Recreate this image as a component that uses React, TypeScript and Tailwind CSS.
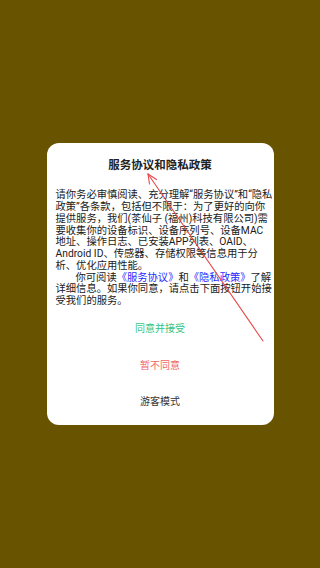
const FONT = { fontFamily: 'Roboto, "Noto Sans CJK SC", sans-serif' };

const lines = [
  "请你务必审慎阅读、充分理解“服务协议”和“隐私",
  "政策”各条款，包括但不限于：为了更好的向你",
  "提供服务，我们(茶仙子 (福州)科技有限公司)需",
  "要收集你的设备标识、设备序列号、设备MAC",
  "地址、操作日志、已安装APP列表、OAID、",
  "Android ID、传感器、存储权限等信息用于分",
  "析、优化应用性能。",
];

function Arrow() {
  return (
    <svg className="pointer-events-none absolute inset-0" width={320} height={568} viewBox="0 0 320 568">
      <g stroke="#e84848" strokeWidth={1.1} fill="none" strokeLinecap="round">
        <line x1={263} y1={341} x2={148} y2={174} />
        <line x1={148} y1={174} x2={149.5} y2={184} />
        <line x1={148} y1={174} x2={156.5} y2={179.5} />
      </g>
    </svg>
  );
}

export default function App() {
  return (
    <div className="relative flex h-[568px] w-[320px] items-center justify-center bg-[#685300]" style={FONT}>
      <div className="w-[227px] rounded-[12px] bg-white px-[9px] pb-[5px] pt-[14px]">
        <h1 className="text-center text-[11.5px] font-bold leading-[16px] text-[#222]">服务协议和隐私政策</h1>
        <div className="mt-[16px] whitespace-nowrap text-[10.3px] leading-[11.73px] text-[#1a1a1a]">
          {lines.map((l) => (
            <div key={l}>{l}</div>
          ))}
          <div className="pl-[20px]">
            你可阅读<span className="text-[#2a2aff]">《服务协议》</span>和<span className="text-[#2a2aff]">《隐私政策》</span>了解
          </div>
          <div>详细信息。如果你同意，请点击下面按钮开始接</div>
          <div>受我们的服务。</div>
        </div>
        <div className="mt-[4px] flex flex-col text-[10px]">
          <button className="h-[36.3px] text-[#33c47a]">同意并接受</button>
          <button className="h-[36.3px] text-[#f26464]">暂不同意</button>
          <button className="h-[36.3px] text-[#333]">游客模式</button>
        </div>
      </div>
      <Arrow />
    </div>
  );
}
